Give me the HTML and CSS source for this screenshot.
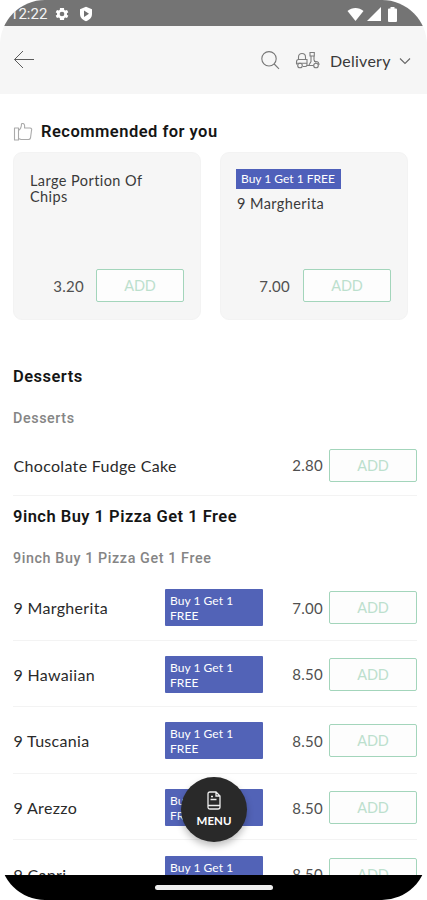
FILE: index.html
```html
<!DOCTYPE html>
<html lang="en">
<head>
<meta charset="utf-8">
<title>Menu</title>
<link rel="stylesheet" href="styles.css">
</head>
<body>
<div class="phone">
  <div class="status">
    <span class="time">12:22</span>
    <svg class="gear" width="16" height="16" viewBox="0 0 24 24"><path fill="#fff" fill-rule="evenodd" d="M19.4 13a7.500 7.500 0 0 0 0-2l2.100-1.600-2-3.500-2.500 1a7 7 0 0 0-1.700-1L15 3H9l-.4 2.900a7 7 0 0 0-1.700 1l-2.400-1-2 3.500L4.600 11a7.500 7.500 0 0 0 0 2l-2.100 1.600 2 3.500 2.400-1a7 7 0 0 0 1.700 1L9 21h6l.4-2.900a7 7 0 0 0 1.700-1l2.400 1 2-3.500zM12 8.500a3.500 3.500 0 1 1 0 7 3.500 3.500 0 0 1 0-7z"/></svg>
    <svg class="shield" width="16" height="16" viewBox="0 0 16 16"><path fill="#fff" d="M8 .8l6 2.400V8c0 3.500-2.500 6-6 7.300C4.500 14 2 11.500 2 8V3.200z"/><path fill="#707070" d="M6 4.500L11 7.800 6 11z"/></svg>
    <div class="signals">
      <svg width="17" height="15" viewBox="0 0 17 15"><path fill="#fff" d="M.5 4C5 .1 12 .1 16.500 4L8.500 14z"/></svg>
      <svg width="14" height="14" viewBox="0 0 14 14"><path fill="#fff" d="M14 0v14H0z"/></svg>
      <svg class="battery" width="9" height="15" viewBox="0 0 9 15"><path fill="#fff" d="M2.500 0h4v1.500H8Q9 1.500 9 2.500V14q0 1-1 1H1q-1 0-1-1V2.500q0-1 1-1h1.500z"/></svg>
    </div>
  </div>
  <header class="topbar">
    <svg class="back" width="22" height="20" viewBox="0 0 22 20" fill="none" stroke="#5c5c5c" stroke-width="1"><path d="M21 10.500H1.500M10 2L1.500 10.500l8.500 8.500"/></svg>
    <svg class="search" width="20" height="20" viewBox="0 0 20 20" fill="none" stroke="#777" stroke-width="1.100"><circle cx="9" cy="7.800" r="7.200"/><path d="M14.200 13l4.800 4.800"/></svg>
    <svg class="scooter" width="25" height="19" viewBox="0 0 25 19" fill="none" stroke="#7c7c7c" stroke-width="1.100"><path d="M3.500 8.500V6C3.500 3.500 5 2.500 7 2.500s3.500 1 3.500 3.500v2.500M1.500 13.500v-2.500c0-1.800.8-2.500 2-2.500H12v5c0 1.500-.5 2-1.500 2H8M12 14.500h6.500M15 1.500h4.300V5H15zM16 5v5.500L14 14M19 5v4l2 2.500M19 10.500h2c2 0 3 1 3 3.500"/><path d="M1.500 12.300H12"/><circle cx="5" cy="14.500" r="2.300"/><circle cx="21" cy="14.500" r="2.300"/></svg>
    <span class="mode">Delivery</span>
    <svg class="chevron" width="12" height="8" viewBox="0 0 12 8" fill="none" stroke="#666" stroke-width="1.100"><path d="M1 1.500l5 5 5-5"/></svg>
  </header>
  <main class="content">
    <div class="rec-title">
      <svg width="20" height="19" viewBox="0 0 20 19" fill="none" stroke="#aaa" stroke-width="1.100" stroke-linejoin="round"><path d="M1.500 5h4v12h-4zM5.500 7.500C8 6 8.500 3.500 8.500.8c2.500-1 3.500 1 3 4.200H17c1.500 0 2 1 1.500 2.500L17.500 15c-.3 1-.8 1.500-2 1.500H8l-2.500-1"/></svg>
      <h2>Recommended for you</h2>
    </div>
    <div class="cards">
      <article class="card">
        <p class="name">Large Portion Of Chips</p>
        <div class="buy"><span class="price">3.20</span><button class="add">ADD</button></div>
      </article>
      <article class="card promo">
        <span class="tag">Buy 1 Get 1 FREE</span>
        <p class="name">9 Margherita</p>
        <div class="buy"><span class="price">7.00</span><button class="add">ADD</button></div>
      </article>
    </div>
    <h2 class="section first">Desserts</h2>
    <h3 class="sub">Desserts</h3>
    <div class="row cake"><span class="item">Chocolate Fudge Cake</span><span class="price">2.80</span><button class="add">ADD</button></div>
    <h2 class="section">9inch Buy 1 Pizza Get 1 Free</h2>
    <h3 class="sub long">9inch Buy 1 Pizza Get 1 Free</h3>
    <div class="row"><span class="item">9 Margherita</span><span class="offer">Buy 1 Get 1 FREE</span><span class="price">7.00</span><button class="add">ADD</button></div>
    <div class="row"><span class="item">9 Hawaiian</span><span class="offer">Buy 1 Get 1 FREE</span><span class="price">8.50</span><button class="add">ADD</button></div>
    <div class="row"><span class="item">9 Tuscania</span><span class="offer">Buy 1 Get 1 FREE</span><span class="price">8.50</span><button class="add">ADD</button></div>
    <div class="row"><span class="item">9 Arezzo</span><span class="offer">Buy 1 Get 1 FREE</span><span class="price">8.50</span><button class="add">ADD</button></div>
    <div class="row"><span class="item">9 Capri</span><span class="offer">Buy 1 Get 1 FREE</span><span class="price">8.50</span><button class="add">ADD</button></div>
  </main>
  <div class="navbar"><span class="handle"></span></div>
  <button class="menu">
    <svg width="14" height="19" viewBox="0 0 14 19" fill="none" stroke="#eee" stroke-width="1.300"><path d="M3 1h6l4 4v11q0 2-2 2H3q-2 0-2-2V3q0-2 2-2zM9 1v4h4M3.500 8.500h6M1 14.500h12M4 5.500h2"/></svg>
    <span>MENU</span>
  </button>
</div>
</body>
</html>
```
FILE: styles.css
```css
* { box-sizing: border-box; }
body { margin: 0; background: #fff; font-family: Lato, sans-serif; color: #3a3a3a; }
h2, h3, p { margin: 0; }
button { font-family: inherit; padding: 0; }
svg { display: block; flex: none; }

.phone { position: relative; display: flex; flex-direction: column; width: 427px; height: 900px; overflow: hidden; border-radius: 45px; background: #fff; }

.status { flex: none; display: flex; align-items: center; height: 26px; padding: 2px 30px 0 10px; background: #747474; }
.time { width: 44px; font: 15px Roboto, sans-serif; color: #f4f4f4; white-space: nowrap; }
.shield { margin-left: 8px; }
.signals { display: flex; align-items: center; gap: 2px; margin-left: auto; }
.signals svg:first-child { margin-right: 1px; }
.battery { margin-left: 5px; }

.topbar { flex: none; display: flex; align-items: center; height: 68px; padding: 1px 16px 0 13px; background: #f6f6f6; }
.back { margin-bottom: 3px; }
.search { margin-left: auto; }
.scooter { margin-left: 15px; }
.mode { margin-left: 10px; font-size: 16px; letter-spacing: 0.250px; width: 61px; white-space: nowrap; }
.chevron { margin-left: 8px; }

.content { flex: 1; min-height: 0; overflow: hidden; padding: 27px 10px 0 13px; }
.rec-title { display: flex; align-items: center; gap: 8px; height: 22px; }
h2 { font: 600 16.500px/20px Roboto, sans-serif; letter-spacing: 0.480px; color: #151515; white-space: nowrap; }

.cards { display: flex; gap: 19px; margin-top: 9px; }
.card { display: flex; flex-direction: column; width: 188px; height: 168px; padding: 20px 16px 17px 16px; border: 1px solid #f3f3f3; border-radius: 9px; background: #f6f6f6; }
.name { font-size: 14.500px; line-height: 16px; letter-spacing: 0.420px; padding-right: 20px; }
.buy { display: flex; align-items: center; justify-content: flex-end; gap: 12px; margin-top: auto; }
.promo { padding: 16px 16px 17px 15px; }
.promo .buy { gap: 13px; }
.promo .name { margin-top: 7px; padding: 0 0 0 1px; }
.tag { align-self: flex-start; width: 105px; height: 20px; padding-left: 5px; background: #4f60ba; color: #fff; font-size: 12px; line-height: 20px; white-space: nowrap; }
.price { font-size: 15px; letter-spacing: 0.250px; color: #505050; }
.add { width: 88px; height: 33px; border: 1.500px solid #a3d5bb; border-radius: 2px; background: #fdfdfd; color: #bce0cd; font-size: 14.500px; letter-spacing: -0.200px; }

.section { margin-top: 11px; }
.section.first { margin-top: 47px; }
.sub { margin-top: 21px; font: 500 14.300px/20px Roboto, sans-serif; letter-spacing: 0.600px; color: #858585; }
.row { display: grid; grid-template-columns: 152px 98px 1fr 88px; align-items: center; height: 66.600px; padding-top: 2px; border-bottom: 1px solid #f3f3f3; }
.row .price { justify-self: end; padding-right: 6px; }
.item { padding-left: 0.500px; font-size: 16px; letter-spacing: 0.320px; color: #2a2a2a; white-space: nowrap; }
.cake { grid-template-columns: 250px 1fr 88px; height: 61px; margin-top: 7px; padding-top: 0; }
.long { margin-bottom: 6px; }
.offer { height: 37px; padding: 4px 15px 0 5px; border-radius: 1px; background: #5263b7; color: #fff; font-size: 12px; line-height: 15px; letter-spacing: 0.050px; }

.navbar { flex: none; display: flex; justify-content: center; height: 25px; padding-top: 10px; background: #000; }
.handle { width: 118px; height: 5px; border-radius: 3px; background: #eee; }

.menu { position: absolute; left: 181px; top: 777px; width: 66px; height: 65px; display: flex; flex-direction: column; align-items: center; justify-content: center; gap: 3px; border: 0; border-radius: 50%; background: #292929; color: #fff; font-size: 11.500px; font-weight: 700; line-height: 15px; box-shadow: 0 4px 7px rgba(0, 0, 0, 0.250); }
```
